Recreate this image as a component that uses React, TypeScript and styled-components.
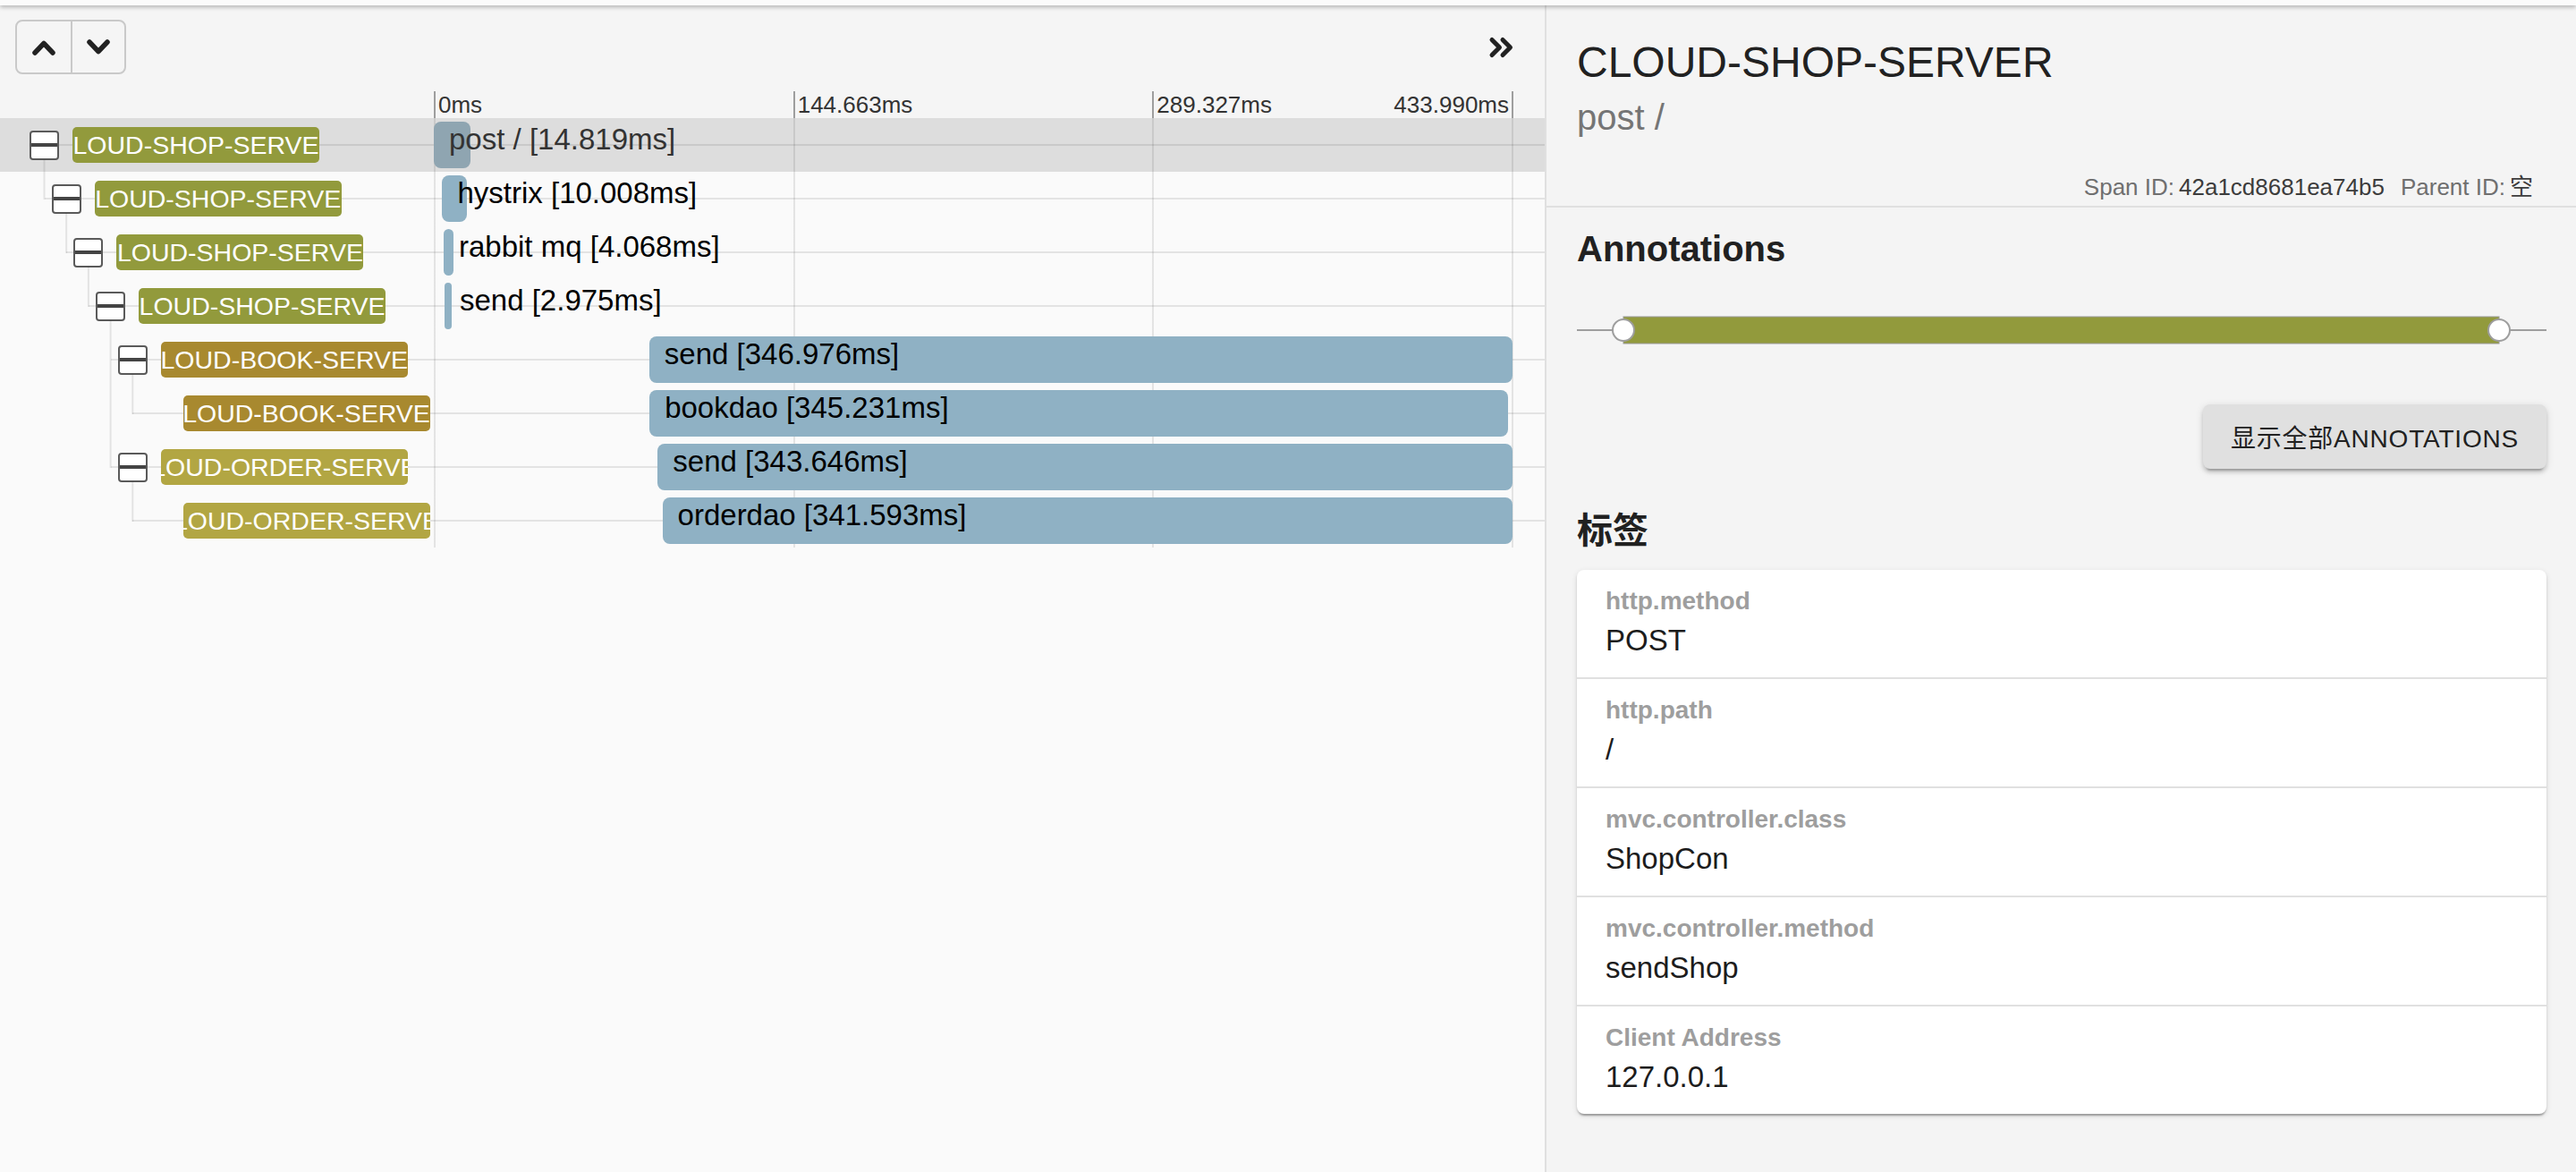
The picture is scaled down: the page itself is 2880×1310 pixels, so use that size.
import React from 'react';
import styled, { createGlobalStyle } from 'styled-components';

const FONT = `"Liberation Sans", "Noto Sans CJK SC", sans-serif`;
const TOTAL_MS = 433.99;
const TREE_WIDTH = 485;
const TIMELINE_WIDTH = 1207;
const ROW_HEIGHT = 60;
const INDENT = 24.7;
const LINE = 'rgba(0, 0, 0, 0.09)';

type Tone = 'shop' | 'book' | 'order';
const toneColor: Record<Tone, string> = {
  shop: '#929a3c',
  book: '#a8892f',
  order: '#b2a643',
};

interface Span {
  depth: number;
  service: string;
  tone: Tone;
  name: string;
  duration: number;
  start: number;
  selected?: boolean;
}

const spans: Span[] = [
  { depth: 0, service: 'CLOUD-SHOP-SERVER', tone: 'shop', name: 'post /', duration: 14.819, start: 0, selected: true },
  { depth: 1, service: 'CLOUD-SHOP-SERVER', tone: 'shop', name: 'hystrix', duration: 10.008, start: 3.4 },
  { depth: 2, service: 'CLOUD-SHOP-SERVER', tone: 'shop', name: 'rabbit mq', duration: 4.068, start: 3.95 },
  { depth: 3, service: 'CLOUD-SHOP-SERVER', tone: 'shop', name: 'send', duration: 2.975, start: 4.3 },
  { depth: 4, service: 'CLOUD-BOOK-SERVER', tone: 'book', name: 'send', duration: 346.976, start: 86.6 },
  { depth: 5, service: 'CLOUD-BOOK-SERVER', tone: 'book', name: 'bookdao', duration: 345.231, start: 86.7 },
  { depth: 4, service: 'CLOUD-ORDER-SERVER', tone: 'order', name: 'send', duration: 343.646, start: 90.0 },
  { depth: 5, service: 'CLOUD-ORDER-SERVER', tone: 'order', name: 'orderdao', duration: 341.593, start: 91.9 },
];

const rows = spans.map((s, i) => {
  let parent = -1;
  for (let j = i - 1; j >= 0; j--) {
    if (spans[j].depth === s.depth - 1) {
      parent = j;
      break;
    }
  }
  const hasChildren = i + 1 < spans.length && spans[i + 1].depth > s.depth;
  return { ...s, parent, hasChildren };
});

const boxCenter = (d: number) => 49.5 + d * INDENT;

const tags = [
  { key: 'http.method', value: 'POST' },
  { key: 'http.path', value: '/' },
  { key: 'mvc.controller.class', value: 'ShopCon' },
  { key: 'mvc.controller.method', value: 'sendShop' },
  { key: 'Client Address', value: '127.0.0.1' },
];

const GlobalStyle = createGlobalStyle`
  html, body { margin: 0; padding: 0; }
  body { font-family: ${FONT}; background: #f5f5f5; color: #212121; }
  * { box-sizing: border-box; }
`;

const Page = styled.div`
  width: 2880px;
  height: 1310px;
  display: flex;
  flex-direction: column;
  overflow: hidden;
  font-family: ${FONT};
`;

const TopBar = styled.div`
  height: 6px;
  flex-shrink: 0;
  background: #fbfbfb;
  box-shadow: 0 2px 5px rgba(0, 0, 0, 0.28);
  position: relative;
  z-index: 5;
`;

const Main = styled.div`
  flex: 1;
  display: flex;
  min-height: 0;
`;

/* ---------- left: trace timeline ---------- */

const LeftPanel = styled.section`
  width: 1729px;
  flex-shrink: 0;
  display: flex;
  flex-direction: column;
  border-right: 2px solid #e0e0e0;
`;

const HeaderArea = styled.div`
  background: #f5f5f5;
`;

const Toolbar = styled.div`
  display: flex;
  align-items: center;
  justify-content: space-between;
  padding: 16px 33px 0 17px;
`;

const ButtonGroup = styled.div`
  display: flex;
  height: 61px;
  border: 2px solid #c9c9c9;
  border-radius: 8px;
  overflow: hidden;
`;

const NavButton = styled.button`
  width: 60px;
  height: 100%;
  display: flex;
  align-items: center;
  justify-content: center;
  background: transparent;
  border: none;
  padding: 0;
  color: #222;
  & + & {
    border-left: 2px solid #c9c9c9;
  }
`;

const CollapseButton = styled.button`
  display: flex;
  align-items: center;
  justify-content: center;
  background: transparent;
  border: none;
  padding: 0;
  color: #222;
`;

const Axis = styled.div`
  height: 49px;
  display: flex;
  align-items: flex-end;
  padding-left: ${TREE_WIDTH}px;
`;

const AxisScale = styled.div`
  width: ${TIMELINE_WIDTH}px;
  display: flex;
`;

const AxisSegment = styled.div<{ $last?: boolean }>`
  flex: 1;
  height: 30px;
  border-left: 2px solid #9e9e9e;
  border-right: ${(p) => (p.$last ? '2px solid #9e9e9e' : 'none')};
  display: flex;
  align-items: flex-end;
  justify-content: space-between;
`;

const AxisLabel = styled.span`
  font-size: 26px;
  line-height: 30px;
  padding: 0 3px;
  color: #333;
`;

const RowsArea = styled.div`
  flex: 1;
  background: #fafafa;
  position: relative;
`;

const Row = styled.div<{ $selected: boolean; $lineStart: number }>`
  position: relative;
  display: flex;
  height: ${ROW_HEIGHT}px;
  background: ${(p) => (p.$selected ? '#dddddd' : 'transparent')};
  &::before {
    content: '';
    position: absolute;
    left: ${(p) => p.$lineStart}px;
    right: 0;
    top: 29px;
    height: 2px;
    background: ${LINE};
  }
`;

const TreeCell = styled.div<{ $depth: number }>`
  position: relative;
  z-index: 1;
  width: ${TREE_WIDTH}px;
  flex-shrink: 0;
  display: flex;
  align-items: center;
  padding-left: ${(p) => 33 + p.$depth * INDENT}px;
`;

const Toggle = styled.span`
  width: 33px;
  height: 33px;
  flex-shrink: 0;
  margin-right: 15px;
  border: 2px solid #5a5a5a;
  border-radius: 4px;
  background: #fff;
  display: flex;
  align-items: center;
  &::after {
    content: '';
    display: block;
    width: 100%;
    height: 4px;
    background: #444;
  }
`;

const ToggleSpacer = styled.span`
  width: 48px;
  flex-shrink: 0;
`;

const ServicePill = styled.span<{ $tone: Tone }>`
  width: 276px;
  height: 40px;
  flex-shrink: 0;
  border-radius: 5px;
  overflow: hidden;
  display: flex;
  justify-content: center;
  align-items: center;
  background: ${(p) => toneColor[p.$tone]};
  color: #fff;
  font-size: 28.5px;
  line-height: 40px;
  white-space: nowrap;
`;

const PillText = styled.span`
  flex-shrink: 0;
`;

const TimelineCell = styled.div`
  position: relative;
  z-index: 1;
  width: ${TIMELINE_WIDTH}px;
  flex-shrink: 0;
  background-image: linear-gradient(${LINE}, ${LINE}), linear-gradient(${LINE}, ${LINE}),
    linear-gradient(${LINE}, ${LINE}), linear-gradient(${LINE}, ${LINE});
  background-size: 2px 100%;
  background-repeat: no-repeat;
  background-position: 0 0, 33.333% 0, 66.667% 0, 100% 0;
`;

const SpanBar = styled.div<{ $selected: boolean }>`
  position: absolute;
  top: 4px;
  height: 52px;
  border-radius: 8px;
  background: ${(p) => (p.$selected ? '#8fa5b1' : '#8fb1c4')};
`;

const SpanLabel = styled.span<{ $selected: boolean }>`
  display: block;
  padding: 3px 0 0 17px;
  font-size: 33px;
  line-height: 33px;
  white-space: nowrap;
  color: ${(p) => (p.$selected ? '#333' : '#000')};
`;

const Tail = styled.div`
  flex: 1;
`;

const TreeLines = styled.svg`
  position: absolute;
  left: 0;
  top: 0;
  z-index: 2;
  pointer-events: none;
`;

/* ---------- right: span detail ---------- */

const RightPanel = styled.section`
  flex: 1;
  background: #f4f4f4;
  display: flex;
  flex-direction: column;
`;

const DetailHeader = styled.div`
  padding: 35px 33px 5px 34px;
  border-bottom: 2px solid #e0e0e0;
`;

const Title = styled.h1`
  margin: 0;
  font-size: 48px;
  line-height: 57.6px;
  font-weight: 400;
  color: #212121;
`;

const Subtitle = styled.div`
  margin-top: 8px;
  font-size: 40px;
  line-height: 48px;
  color: #757575;
`;

const IdsRow = styled.div`
  margin-top: 39px;
  padding-right: 15px;
  display: flex;
  justify-content: flex-end;
  gap: 18px;
  font-size: 26px;
  line-height: 31px;
`;

const IdPair = styled.span`
  display: flex;
  gap: 5px;
`;

const IdLabel = styled.span`
  color: #6f6f6f;
`;

const IdValue = styled.span`
  color: #3c3c3c;
`;

const DetailBody = styled.div`
  padding: 0 33px 40px 34px;
  display: flex;
  flex-direction: column;
`;

const SectionTitle = styled.h2<{ $gap: number }>`
  margin: ${(p) => p.$gap}px 0 0;
  font-size: 40px;
  line-height: 48px;
  font-weight: 700;
  color: #212121;
`;

const AnnotationTrack = styled.svg`
  margin-top: 47px;
  display: block;
`;

const ShowAllButton = styled.button`
  align-self: flex-end;
  margin-top: 63px;
  height: 72px;
  padding: 0 31px;
  border: none;
  border-radius: 8px;
  background: #e0e0e0;
  color: #212121;
  font-family: ${FONT};
  font-size: 28px;
  letter-spacing: 0.8px;
  box-shadow: 0 6px 2px -4px rgba(0, 0, 0, 0.2), 0 4px 4px 0 rgba(0, 0, 0, 0.14),
    0 2px 10px 0 rgba(0, 0, 0, 0.12);
`;

const TagCard = styled.div`
  margin-top: 20px;
  background: #fff;
  border-radius: 8px;
  overflow: hidden;
  box-shadow: 0 4px 2px -2px rgba(0, 0, 0, 0.2), 0 2px 2px 0 rgba(0, 0, 0, 0.14),
    0 2px 6px 0 rgba(0, 0, 0, 0.12);
`;

const TagRow = styled.div`
  padding: 14px 32px 18px;
  & + & {
    border-top: 2px solid #e0e0e0;
  }
`;

const TagKey = styled.div`
  font-size: 28px;
  line-height: 42px;
  font-weight: 700;
  color: #9e9e9e;
`;

const TagValue = styled.div`
  font-size: 33px;
  line-height: 46px;
  color: #1c1c1c;
`;

/* ---------- icons ---------- */

const ChevronUp = () => (
  <svg width="30" height="22" viewBox="0 0 30 22">
    <polyline points="5,17 15,6.5 25,17" fill="none" stroke="currentColor" strokeWidth="5.5" strokeLinecap="round" strokeLinejoin="round" />
  </svg>
);

const ChevronDown = () => (
  <svg width="30" height="22" viewBox="0 0 30 22">
    <polyline points="5,5 15,15.5 25,5" fill="none" stroke="currentColor" strokeWidth="5.5" strokeLinecap="round" strokeLinejoin="round" />
  </svg>
);

const AnglesRight = () => (
  <svg width="30" height="26" viewBox="0 0 30 26">
    <polyline points="4,4.5 12.5,13 4,21.5" fill="none" stroke="currentColor" strokeWidth="5" strokeLinecap="round" strokeLinejoin="round" />
    <polyline points="16,4.5 24.5,13 16,21.5" fill="none" stroke="currentColor" strokeWidth="5" strokeLinecap="round" strokeLinejoin="round" />
  </svg>
);

/* ---------- app ---------- */

const ticks = ['0ms', '144.663ms', '289.327ms'];

export default function App() {
  const connectors = rows
    .map((r, i) => {
      if (!r.hasChildren) return null;
      let last = i;
      rows.forEach((c, j) => {
        if (c.parent === i) last = j;
      });
      const x = boxCenter(r.depth);
      return { x, y1: i * ROW_HEIGHT + 46.5, y2: last * ROW_HEIGHT + 30 };
    })
    .filter(Boolean) as { x: number; y1: number; y2: number }[];

  return (
    <>
      <GlobalStyle />
      <Page>
        <TopBar />
        <Main>
          <LeftPanel>
            <HeaderArea>
              <Toolbar>
                <ButtonGroup>
                  <NavButton aria-label="previous">
                    <ChevronUp />
                  </NavButton>
                  <NavButton aria-label="next">
                    <ChevronDown />
                  </NavButton>
                </ButtonGroup>
                <CollapseButton aria-label="collapse">
                  <AnglesRight />
                </CollapseButton>
              </Toolbar>
              <Axis>
                <AxisScale>
                  <AxisSegment>
                    <AxisLabel>{ticks[0]}</AxisLabel>
                  </AxisSegment>
                  <AxisSegment>
                    <AxisLabel>{ticks[1]}</AxisLabel>
                  </AxisSegment>
                  <AxisSegment $last>
                    <AxisLabel>{ticks[2]}</AxisLabel>
                    <AxisLabel>433.990ms</AxisLabel>
                  </AxisSegment>
                </AxisScale>
              </Axis>
            </HeaderArea>
            <RowsArea>
              {rows.map((r, i) => {
                const lineStart = r.parent >= 0 ? boxCenter(rows[r.parent].depth) : boxCenter(r.depth);
                return (
                  <Row key={i} $selected={!!r.selected} $lineStart={lineStart}>
                    <TreeCell $depth={r.depth}>
                      {r.hasChildren ? <Toggle /> : <ToggleSpacer />}
                      <ServicePill $tone={r.tone}>
                        <PillText>{r.service}</PillText>
                      </ServicePill>
                    </TreeCell>
                    <TimelineCell>
                      <SpanBar
                        $selected={!!r.selected}
                        style={{
                          left: `${(r.start / TOTAL_MS) * 100}%`,
                          width: `${(r.duration / TOTAL_MS) * 100}%`,
                        }}
                      >
                        <SpanLabel $selected={!!r.selected}>
                          {r.name} [{r.duration.toFixed(3)}ms]
                        </SpanLabel>
                      </SpanBar>
                    </TimelineCell>
                    <Tail />
                  </Row>
                );
              })}
              <TreeLines width={TREE_WIDTH} height={rows.length * ROW_HEIGHT}>
                {connectors.map((c, i) => (
                  <line key={i} x1={c.x} x2={c.x} y1={c.y1} y2={c.y2 + 1} stroke={LINE} strokeWidth="2" />
                ))}
              </TreeLines>
            </RowsArea>
          </LeftPanel>

          <RightPanel>
            <DetailHeader>
              <Title>CLOUD-SHOP-SERVER</Title>
              <Subtitle>post /</Subtitle>
              <IdsRow>
                <IdPair>
                  <IdLabel>Span ID:</IdLabel>
                  <IdValue>42a1cd8681ea74b5</IdValue>
                </IdPair>
                <IdPair>
                  <IdLabel>Parent ID:</IdLabel>
                  <IdValue>空</IdValue>
                </IdPair>
              </IdsRow>
            </DetailHeader>
            <DetailBody>
              <SectionTitle $gap={22}>Annotations</SectionTitle>
              <AnnotationTrack width="1084" height="40" viewBox="0 0 1084 40">
                <line x1="0" x2="1084" y1="20" y2="20" stroke="#9e9e9e" strokeWidth="2" />
                <rect x="52" y="5" width="979" height="30" fill={toneColor.shop} stroke="#9a9a9a" strokeWidth="1" />
                <circle cx="52" cy="20" r="12" fill="#fff" stroke="#9e9e9e" strokeWidth="2" />
                <circle cx="1031" cy="20" r="12" fill="#fff" stroke="#9e9e9e" strokeWidth="2" />
              </AnnotationTrack>
              <ShowAllButton>显示全部ANNOTATIONS</ShowAllButton>
              <SectionTitle $gap={45}>标签</SectionTitle>
              <TagCard>
                {tags.map((t) => (
                  <TagRow key={t.key}>
                    <TagKey>{t.key}</TagKey>
                    <TagValue>{t.value}</TagValue>
                  </TagRow>
                ))}
              </TagCard>
            </DetailBody>
          </RightPanel>
        </Main>
      </Page>
    </>
  );
}
